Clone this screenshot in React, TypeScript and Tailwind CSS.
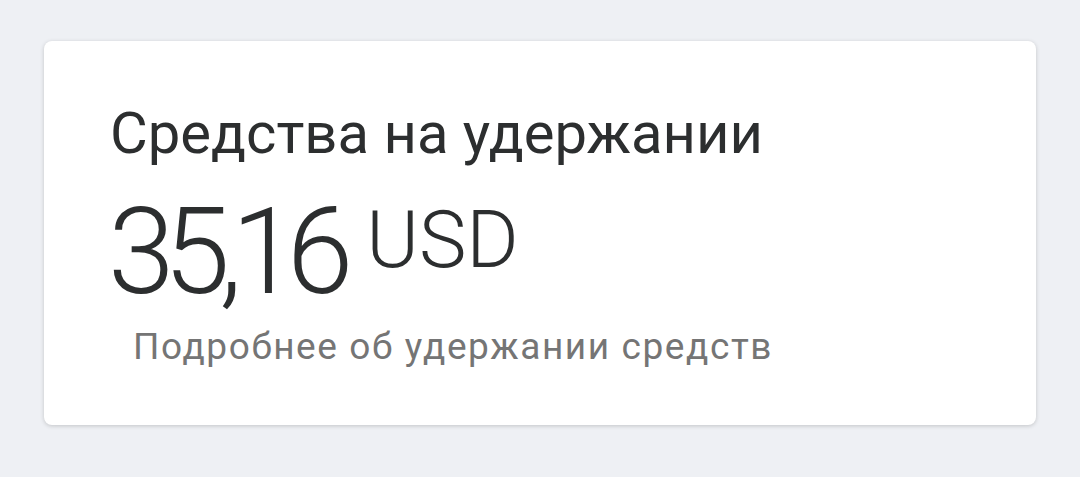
export default function App() {
  return (
    <div className="w-[1080px] h-[477px] bg-[#eef0f4] pt-[41px] pl-[44px]" style={{ fontFamily: 'Roboto, "Noto Sans", sans-serif' }}>
      <div className="w-[992px] h-[384px] bg-white rounded-[8px] shadow-[0_1px_4px_rgba(0,0,0,0.18)] pl-[66px] pt-[63px]">
        <div className="text-[58px] leading-[58px] text-[#2c2e2f]">Средства на удержании</div>
        <div className="flex items-start mt-[30px] text-[#2c2e2f] font-light">
          <span className="text-[120px] leading-[120px] tracking-[-11px] ml-[-2px]">35,16</span>
          <span className="text-[80px] leading-[80px] mt-[8px] ml-[24px]">USD</span>
        </div>
        <div className="mt-[16px] ml-[23px] text-[37px] leading-[37px] tracking-[1.6px] text-[#757575]">Подробнее об удержании средств</div>
      </div>
    </div>
  );
}
